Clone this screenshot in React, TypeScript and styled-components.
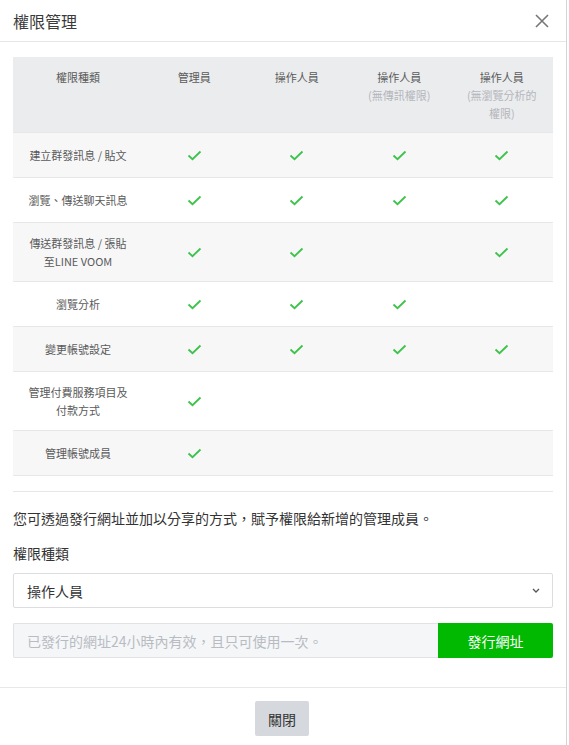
import styled, { createGlobalStyle } from 'styled-components';

const GlobalStyle = createGlobalStyle`
  body {
    margin: 0;
    background: #fff;
    font-family: "Noto Sans CJK TC", "Noto Sans", sans-serif;
    color: #333;
  }
`;

const Modal = styled.div`
  width: 566px;
  min-height: 745px;
  border-right: 1px solid #d4d4d4;
  background: #fff;
  display: flex;
  flex-direction: column;
`;

const Header = styled.header`
  height: 41px;
  border-bottom: 1px solid #e6e6e6;
  display: flex;
  align-items: center;
  justify-content: space-between;
  padding: 0 13px;
`;

const Title = styled.h1`
  margin: 0;
  font-size: 16px;
  font-weight: 400;
  color: #3a3a3a;
  line-height: 20px;
  padding-top: 1px;
`;

const CloseButton = styled.button`
  border: 0;
  background: none;
  padding: 0;
  width: 16px;
  height: 16px;
  display: flex;
  align-items: center;
  justify-content: center;
  margin-right: 3px;
  cursor: pointer;
`;

const Body = styled.div`
  padding: 15px 13px 29px;
  flex: 1;
`;

const Table = styled.div`
  display: grid;
  grid-template-columns: 130px repeat(4, 1fr);
  font-size: 11px;
  line-height: 18px;
  color: #5a5a5a;
`;

const Cell = styled.div<{ $bg: string; $head?: boolean }>`
  background: ${({ $bg }) => $bg};
  min-height: ${({ $head }) => ($head ? 'auto' : '22px')};
  padding: ${({ $head }) => ($head ? '11px 6px 10px' : '11px 6px')};
  border-bottom: 1px solid #e6e7e9;
  display: flex;
  flex-direction: column;
  align-items: center;
  justify-content: ${({ $head }) => ($head ? 'flex-start' : 'center')};
  text-align: center;
`;

const Sub = styled.span`
  color: #b3b6bb;
`;

const Divider = styled.hr`
  border: 0;
  border-top: 1px solid #e6e6e6;
  margin: 15px 0 16px;
`;

const Description = styled.p`
  margin: 0;
  font-size: 14px;
  line-height: 20px;
  color: #333;
`;

const Label = styled.div`
  margin-top: 15px;
  font-size: 14px;
  line-height: 20px;
  color: #333;
`;

const Select = styled.div`
  margin-top: 10px;
  height: 33px;
  border: 1px solid #dcdde0;
  border-radius: 2px;
  display: flex;
  align-items: center;
  justify-content: space-between;
  padding: 0 12px 0 13px;
  font-size: 14px;
  color: #333;
`;

const UrlRow = styled.div`
  margin-top: 15px;
  display: flex;
  height: 35px;
`;

const UrlInput = styled.div`
  flex: 1;
  background: #f5f6f8;
  border: 1px solid #e0e2e5;
  border-right: 0;
  border-radius: 2px 0 0 2px;
  display: flex;
  align-items: center;
  padding: 0 13px;
  font-size: 14px;
  color: #b8bcc2;
`;

const IssueButton = styled.button`
  width: 115px;
  border: 0;
  border-radius: 0 2px 2px 0;
  background: #00b900;
  color: #fff;
  font-family: inherit;
  font-size: 14px;
`;

const Footer = styled.footer`
  border-top: 1px solid #e8e8e8;
  padding: 13px 0 9px;
  display: flex;
  justify-content: center;
`;

const CloseAction = styled.button`
  width: 54px;
  height: 35px;
  border: 0;
  border-radius: 2px;
  background: #d5d8dd;
  color: #333;
  font-family: inherit;
  font-size: 14px;
  margin-right: 2px;
`;

const Check = () => (
  <svg width="15" height="11" viewBox="0 0 15 11">
    <path d="M1.5 5.5 L5.5 9.2 L13.5 1.5" fill="none" stroke="#3dc24a" strokeWidth="1.8" />
  </svg>
);

type Row = { label: React.ReactNode; checks: boolean[] };

const rows: Row[] = [
  { label: '建立群發訊息 / 貼文', checks: [true, true, true, true] },
  { label: '瀏覽、傳送聊天訊息', checks: [true, true, true, true] },
  { label: <>傳送群發訊息 / 張貼<br />至LINE VOOM</>, checks: [true, true, false, true] },
  { label: '瀏覽分析', checks: [true, true, true, false] },
  { label: '變更帳號設定', checks: [true, true, true, true] },
  { label: <>管理付費服務項目及<br />付款方式</>, checks: [true, false, false, false] },
  { label: '管理帳號成員', checks: [true, false, false, false] },
];

const headBg = '#ebecee';

export default function App() {
  return (
    <>
      <GlobalStyle />
      <Modal>
        <Header>
          <Title>權限管理</Title>
          <CloseButton aria-label="close">
            <svg width="14" height="14" viewBox="0 0 14 14">
              <path d="M1 1 L13 13 M13 1 L1 13" stroke="#777" strokeWidth="1.6" />
            </svg>
          </CloseButton>
        </Header>
        <Body>
          <Table>
            <Cell $bg={headBg} $head>權限種類</Cell>
            <Cell $bg={headBg} $head>管理員</Cell>
            <Cell $bg={headBg} $head>操作人員</Cell>
            <Cell $bg={headBg} $head>
              操作人員
              <Sub>(無傳訊權限)</Sub>
            </Cell>
            <Cell $bg={headBg} $head>
              操作人員
              <Sub>(無瀏覽分析的<br />權限)</Sub>
            </Cell>
            {rows.map((row, i) => {
              const bg = i % 2 === 0 ? '#f7f7f8' : '#fff';
              return [
                <Cell key={`l${i}`} $bg={bg}>{row.label}</Cell>,
                ...row.checks.map((c, j) => (
                  <Cell key={`c${i}-${j}`} $bg={bg}>{c && <Check />}</Cell>
                )),
              ];
            })}
          </Table>
          <Divider />
          <Description>您可透過發行網址並加以分享的方式，賦予權限給新增的管理成員。</Description>
          <Label>權限種類</Label>
          <Select>
            <span>操作人員</span>
            <svg width="8" height="5" viewBox="0 0 8 5">
              <path d="M1 1 L4 4 L7 1" fill="none" stroke="#555" strokeWidth="1.3" />
            </svg>
          </Select>
          <UrlRow>
            <UrlInput>已發行的網址24小時內有效，且只可使用一次。</UrlInput>
            <IssueButton>發行網址</IssueButton>
          </UrlRow>
        </Body>
        <Footer>
          <CloseAction>關閉</CloseAction>
        </Footer>
      </Modal>
    </>
  );
}
